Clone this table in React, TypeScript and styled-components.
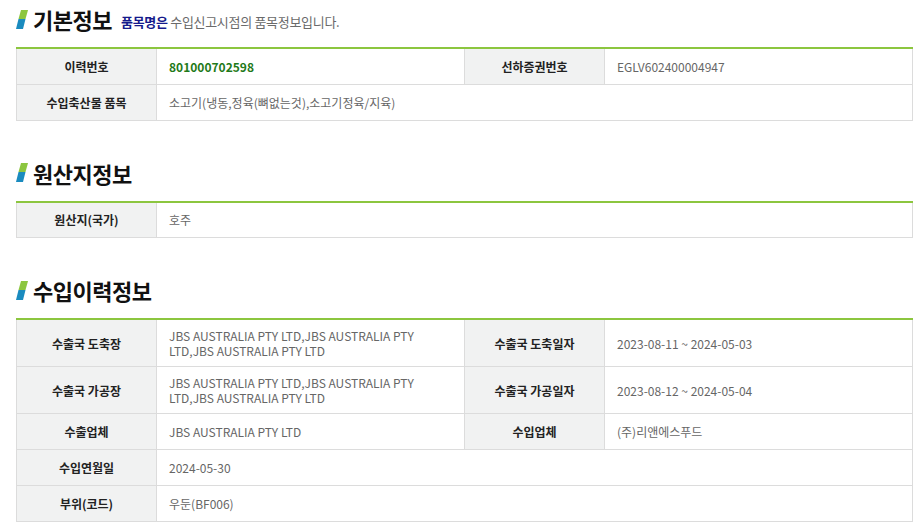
import React from "react";
import styled, { createGlobalStyle } from "styled-components";

const GlobalStyle = createGlobalStyle`
  body {
    margin: 0;
    background: #fff;
    font-family: "Noto Sans CJK KR", "Noto Sans", sans-serif;
  }
`;

const Page = styled.div`
  padding: 0 10px 0 16px;
`;

const Section = styled.section`
  & + & {
    margin-top: 33px;
  }
`;

const Heading = styled.div`
  display: flex;
  align-items: center;
  height: 38px;
  margin-bottom: 9px;
`;

const Title = styled.h2`
  margin: 0 0 0 5px;
  font-size: 22px;
  font-weight: 700;
  color: #111;
  letter-spacing: -0.5px;
`;

const Sub = styled.span`
  margin-left: 9px;
  margin-top: 4px;
  font-size: 13px;
  color: #6a6a6a;
  letter-spacing: -0.3px;
  b {
    color: #151a8c;
    font-weight: 700;
  }
`;

const Table = styled.table`
  width: 100%;
  border-collapse: collapse;
  table-layout: fixed;
  border-top: 2px solid #8cc63f;
  font-size: 12px;
  line-height: 15px;
`;

const Th = styled.th`
  height: 36px;
  box-sizing: border-box;
  padding: 8px 10px;
  background: #f1f2f2;
  border: 1px solid #dcdcdc;
  border-top: none;
  color: #222;
  font-weight: 700;
  text-align: center;
`;

const Td = styled.td<{ $accent?: boolean }>`
  height: 36px;
  box-sizing: border-box;
  padding: 8px 12px;
  border: 1px solid #dcdcdc;
  border-top: none;
  color: ${(p) => (p.$accent ? "#1f7a1a" : "#666")};
  font-weight: ${(p) => (p.$accent ? 700 : 400)};
`;

const Mark = () => (
  <svg width="12" height="19" viewBox="0 0 12 19">
    <polygon points="5,0 12,0 9.5,9 2.5,9" fill="#8cc63f" />
    <polygon points="2.5,9 9.5,9 7,19 0,19" fill="#1a8bbf" />
  </svg>
);

const Cols = () => (
  <colgroup>
    <col style={{ width: 140 }} />
    <col style={{ width: 308 }} />
    <col style={{ width: 140 }} />
    <col />
  </colgroup>
);

const JBS = "JBS AUSTRALIA PTY LTD,JBS AUSTRALIA PTY LTD,JBS AUSTRALIA PTY LTD";

export default function App() {
  return (
    <Page>
      <GlobalStyle />
      <Section>
        <Heading>
          <Mark />
          <Title>기본정보</Title>
          <Sub>
            <b>품목명은</b> 수입신고시점의 품목정보입니다.
          </Sub>
        </Heading>
        <Table>
          <Cols />
          <tbody>
            <tr>
              <Th>이력번호</Th>
              <Td $accent>801000702598</Td>
              <Th>선하증권번호</Th>
              <Td>EGLV602400004947</Td>
            </tr>
            <tr>
              <Th>수입축산물 품목</Th>
              <Td colSpan={3}>소고기(냉동,정육(뼈없는것),소고기정육/지육)</Td>
            </tr>
          </tbody>
        </Table>
      </Section>

      <Section>
        <Heading>
          <Mark />
          <Title>원산지정보</Title>
        </Heading>
        <Table>
          <Cols />
          <tbody>
            <tr>
              <Th>원산지(국가)</Th>
              <Td colSpan={3}>호주</Td>
            </tr>
          </tbody>
        </Table>
      </Section>

      <Section>
        <Heading>
          <Mark />
          <Title>수입이력정보</Title>
        </Heading>
        <Table>
          <Cols />
          <tbody>
            <tr>
              <Th>수출국 도축장</Th>
              <Td>{JBS}</Td>
              <Th>수출국 도축일자</Th>
              <Td>2023-08-11 ~ 2024-05-03</Td>
            </tr>
            <tr>
              <Th>수출국 가공장</Th>
              <Td>{JBS}</Td>
              <Th>수출국 가공일자</Th>
              <Td>2023-08-12 ~ 2024-05-04</Td>
            </tr>
            <tr>
              <Th>수출업체</Th>
              <Td>JBS AUSTRALIA PTY LTD</Td>
              <Th>수입업체</Th>
              <Td>(주)리앤에스푸드</Td>
            </tr>
            <tr>
              <Th>수입연월일</Th>
              <Td colSpan={3}>2024-05-30</Td>
            </tr>
            <tr>
              <Th>부위(코드)</Th>
              <Td colSpan={3}>우둔(BF006)</Td>
            </tr>
          </tbody>
        </Table>
      </Section>
    </Page>
  );
}
